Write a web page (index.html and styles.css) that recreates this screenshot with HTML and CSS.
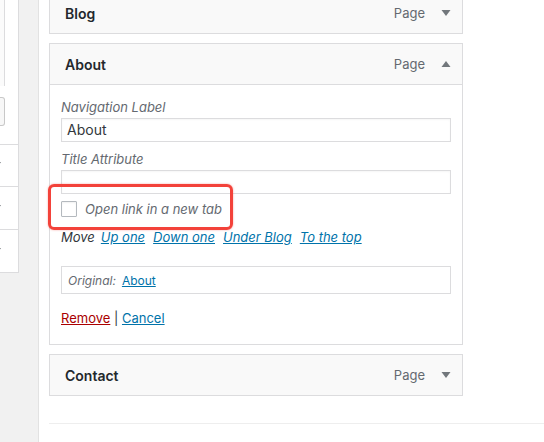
FILE: index.html
```html
<!DOCTYPE html>
<html lang="en">
<head>
<meta charset="utf-8">
<title>Menu items</title>
<link rel="stylesheet" href="styles.css">
</head>
<body>
  <aside class="side">
    <div class="side-box"></div>
    <div class="side-btn"></div>
    <div class="side-row"><span class="side-arrow"></span></div>
    <div class="side-row"><span class="side-arrow"></span></div>
    <div class="side-row"><span class="side-arrow"></span></div>
  </aside>
  <main class="main">
    <div class="items">
      <div class="item">
        <div class="item-head">
          <span class="item-title">Blog</span>
          <span class="item-type">Page</span>
          <svg class="item-arrow" width="10" height="6" viewBox="0 0 10 6"><polygon points="0.5,0 9.5,0 5,6" fill="#72777c"/></svg>
        </div>
      </div>
      <div class="item item-open">
        <div class="item-head">
          <span class="item-title">About</span>
          <span class="item-type">Page</span>
          <svg class="item-arrow" width="10" height="6" viewBox="0 0 10 6"><polygon points="0.5,6 9.5,6 5,0" fill="#72777c"/></svg>
        </div>
        <div class="item-body">
          <label class="field-label">Navigation Label</label>
          <div class="input">About</div>
          <label class="field-label field-gap">Title Attribute</label>
          <div class="input"></div>
          <div class="check-row">
            <span class="checkbox"></span>
            <span class="check-text">Open link in a new tab</span>
          </div>
          <div class="move-row">
            <span class="move-label">Move</span>
            <a class="link link-first" href="#">Up one</a>
            <a class="link" href="#">Down one</a>
            <a class="link" href="#">Under Blog</a>
            <a class="link" href="#">To the top</a>
          </div>
          <div class="original">
            <span class="original-label">Original:</span>
            <a class="link-plain" href="#">About</a>
          </div>
          <div class="actions">
            <a class="remove" href="#">Remove</a> <span class="sep">|</span> <a class="cancel" href="#">Cancel</a>
          </div>
          <div class="highlight"></div>
        </div>
      </div>
      <div class="item">
        <div class="item-head">
          <span class="item-title">Contact</span>
          <span class="item-type">Page</span>
          <svg class="item-arrow" width="10" height="6" viewBox="0 0 10 6"><polygon points="0.5,0 9.5,0 5,6" fill="#72777c"/></svg>
        </div>
      </div>
    </div>
    <div class="bottom-line"></div>
  </main>
</body>
</html>
```

FILE: styles.css
```css
* { box-sizing: border-box; }

html, body {
  margin: 0;
  height: 442px;
  overflow: hidden;
}

body {
  display: flex;
  align-items: flex-start;
  background: #f1f1f1;
  font-family: "Inter", "Liberation Sans", sans-serif;
  font-size: 13px;
  color: #32373c;
}

/* left column */
.side {
  width: 19px;
  height: 273px;
  margin-right: 19px;
  background: #fff;
  border-right: 1px solid #dcdcde;
  border-bottom: 1px solid #dcdcde;
  display: flex;
  flex-direction: column;
  overflow: hidden;
  flex-shrink: 0;
}

.side-box {
  width: 5px;
  height: 86px;
  background: #fbfbfb;
  border-right: 1px solid #dcdcde;
}

.side-btn {
  width: 5px;
  height: 29px;
  margin-top: 11px;
  background: #f7f7f7;
  border: 1px solid #c8c8c8;
  border-left: none;
  border-radius: 0 3px 3px 0;
}

.side-row {
  height: 43px;
  border-top: 1px solid #dcdcde;
  display: flex;
  align-items: center;
}

.side-btn + .side-row { margin-top: 18px; }

.side-arrow {
  width: 0;
  height: 0;
  margin-left: -7px;
  border-left: 4.5px solid transparent;
  border-right: 4.5px solid transparent;
  border-top: 6px solid #72777c;
}

/* main column */
.main {
  flex: 1;
  height: 442px;
  background: #fff;
  border-left: 1px solid #e2e2e2;
  padding-left: 10px;
}

.items {
  margin-top: -8px;
  display: flex;
  flex-direction: column;
  gap: 9px;
}

.item {
  width: 414px;
  border: 1px solid #dcdcde;
  background: #fff;
}

.item-head {
  height: 40px;
  background: #f9f9f9;
  display: flex;
  align-items: center;
  padding: 0 11px 0 15px;
}

.item-open .item-head {
  height: 41px;
  border-bottom: 1px solid #dcdcde;
}

.item-title {
  flex: 1;
  font-size: 14px;
  font-weight: 600;
  color: #23282d;
}

.item-type {
  color: #646970;
  font-size: 13px;
  margin-right: 16px;
}

.item-arrow { display: block; }

.item-body {
  position: relative;
  padding: 13px 11px 17px;
  display: flex;
  flex-direction: column;
}

.field-label {
  font-style: italic;
  line-height: 18px;
  color: #646970;
}

.field-gap { margin-top: 8px; }

.input {
  margin-top: 2px;
  height: 24px;
  border: 1px solid #dcdcde;
  padding: 0 5px;
  font-size: 14px;
  line-height: 22px;
  color: #32373c;
  box-shadow: inset 0 1px 2px rgba(0,0,0,0.04);
}

.check-row {
  margin-top: 6px;
  height: 18px;
  display: flex;
  align-items: center;
}

.checkbox {
  width: 16px;
  height: 16px;
  border: 1px solid #b4b9be;
  border-radius: 1px;
  background: #fff;
  margin-right: 8px;
  box-shadow: inset 0 1px 2px rgba(0,0,0,0.06);
}

.check-text {
  font-style: italic;
  color: #646970;
}

.move-row {
  margin-top: 10px;
  line-height: 18px;
  display: flex;
  gap: 8px;
  font-style: italic;
}

.move-label { color: #32373c; }

.link-first { margin-left: -2px; }

.link {
  color: #0073aa;
  text-decoration: underline;
}

.original {
  margin-top: 20px;
  height: 28px;
  border: 1px solid #dcdcde;
  padding: 0 6px;
  display: flex;
  align-items: center;
  gap: 6px;
  font-size: 12px;
}

.original-label {
  font-style: italic;
  color: #646970;
}

.link-plain {
  color: #0073aa;
  text-decoration: underline;
}

.actions {
  margin-top: 15px;
  line-height: 18px;
  color: #32373c;
}

.remove {
  color: #a00;
  text-decoration: underline;
}

.cancel {
  color: #0073aa;
  text-decoration: underline;
}

.sep { color: #32373c; }

.highlight {
  position: absolute;
  left: -2px;
  top: 99px;
  width: 185px;
  height: 46px;
  border: 3px solid #f3423a;
  border-radius: 6px;
  box-shadow: 0 0 2px rgba(243,66,58,0.5);
  pointer-events: none;
}

.bottom-line {
  margin-top: 27px;
  border-top: 1px solid #eeeeee;
}
```
